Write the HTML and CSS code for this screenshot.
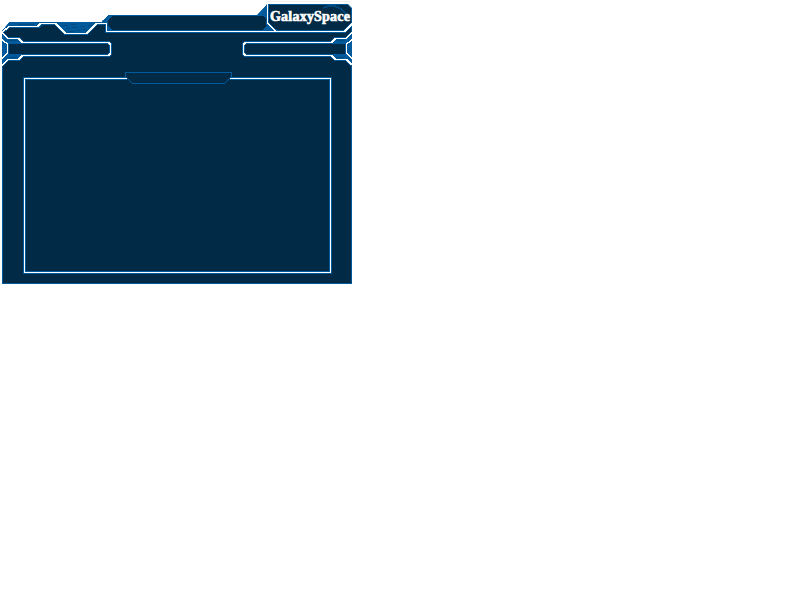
FILE: index.html
```
<!DOCTYPE html>
<html lang="en">
<head>
<meta charset="utf-8">
<title>GalaxySpace</title>
<link rel="stylesheet" href="styles.css">
</head>
<body>
<main class="panel">
<svg class="frame" viewBox="0 0 360 290" width="360" height="290" shape-rendering="crispEdges" aria-hidden="true">
  <defs>
    <clipPath id="body"><path d="M2 31L9 22H101L108 15H257L267 4H348L352 8V284H2Z"/></clipPath>
    <g id="lines">
      <path d="M2 32.500L9 26.500H37.500L40.500 23.500H55.500L65.500 33.500H86.500L96.500 23.500H106.500V31.500H344.500L352 24"/>
      <path d="M2 33L8 38.500H18.500L22.500 42.500H108.500L110.500 44.500V53.500L108.500 55.500H22.500L18.500 59.500H8.500L2 65"/>
      <path d="M2 40L7.500 44V53L2 58"/>
      <path d="M352 33L346 38.500H335.500L331.500 42.500H245.500L243.500 44.500V53.500L245.500 55.500H331.500L335.500 59.500H346.500L352 65"/>
      <path d="M352 40L346.500 44V53L352 58"/>
      <path d="M267.500 4V23.500L276 31"/>
      <path d="M127 78.500H24.500V272.500H330.500V78.500H230"/>
    </g>
  </defs>
  <path class="shade" d="M267 1.500H351"/>
  <g clip-path="url(#body)">
    <path class="blue" d="M2 31L9 22H101L108 15H257L267 4H348L352 8V284H2Z"/>
    <path class="navy" d="M3 33L10 28H39L42 25H55L65 35H87L98 25H105V33H345L351 27V33L346 38H335L331 42H246L243 45V53L246 56H331L335 60H346L351 65V283H3V65L8 60H18L22 56H108L111 53V45L108 42H22L18 38H8L3 33Z"/>
    <path class="navy" d="M112 16H263L267 20V25L262 30H112L108 26V20ZM268 5H347L351 9V24L345 30H276L268 23Z"/>
    <path class="navy" d="M8 44H108L109 45V53L108 54H8ZM246 44H346V54H246L245 53V45Z"/>
    <path class="texture" d="M18 24.500H34M62 25.500H68M71 24.500H76M80 26.500H85M88 25.500H93M66 28.500H70M72 27.500H78M81 29.500H87M69 31.500H75M77 30.500H80M102 20.500H106M104 23.500H106M8 40.500H17M337 40.500H345M10 57.500H17M337 57.500H345"/>
    <path class="swirl" d="M334 6Q347 10 347 19M323 8Q331 4 340 8"/>
    <use href="#lines" class="glow"/>
    <use href="#lines" class="line"/>
    <path class="tab" d="M125.500 72.500H231.500V76.500L224.500 83.500H132.500L125.500 76.500Z"/>
  </g>
</svg>
<h1 class="title">GalaxySpace</h1>
</main>
</body>
</html>
```
FILE: styles.css
```
body{margin:0;background:#fff}
.panel{position:relative;width:360px;height:290px}
.frame{display:block}
.blue{fill:#005a9c}
.navy{fill:#002a46}
.shade{stroke:#f2f2f2;fill:none}
.line{fill:none;stroke:#fff;stroke-width:1.5}
.glow{fill:none;stroke:#005a9c;stroke-width:3}
.tab{fill:#002a46;stroke:#005a9c;stroke-width:1.4}
.texture{fill:none;stroke:#004a80}
.swirl{fill:none;stroke:#00457a;stroke-width:2}
.title{position:absolute;left:270px;top:9px;margin:0;font:bold 14px/16px "Liberation Serif",serif;letter-spacing:.22px;color:#fff;-webkit-text-stroke:.6px #fff;white-space:nowrap}
```
